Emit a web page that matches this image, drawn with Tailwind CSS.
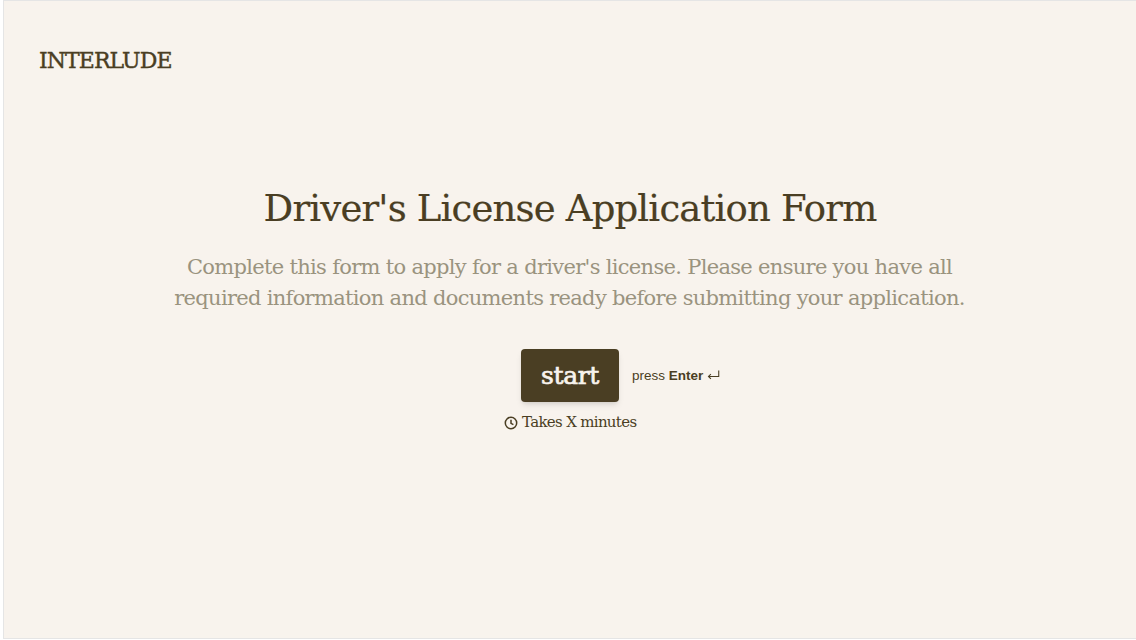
<!DOCTYPE html>
<html lang="en">
<head>
    <meta charset="UTF-8">
    <title>Interlude</title>
    <script src="https://cdn.jsdelivr.net/npm/@tailwindcss/browser@4"></script>
</head>
<body class="bg-white">
    <div class="ml-[3px] mb-[1px] w-[1133px] h-[639px] bg-[#f8f3ed] border-l border-t border-b border-[#e5e5e5] font-['DejaVu_Serif',serif] text-[#4a3e23] overflow-hidden">
        <!-- Logo -->
        <div class="pl-[35px] pt-[47px] h-[186px]">
            <div class="text-[22px] leading-[26px] font-normal tracking-[-0.93px] [-webkit-text-stroke:0.4px_#4a3e23]">INTERLUDE</div>
        </div>

        <!-- Intro -->
        <div class="flex flex-col items-center">
            <h1 class="text-[37px] leading-[44px] font-normal tracking-[-0.82px] [-webkit-text-stroke:0.2px_#4a3e23]">Driver's License Application Form</h1>
            <p class="mt-[21px] mr-[1px] text-[21px] leading-[31px] text-center text-[#9a937f] tracking-[-0.69px]">
                Complete this form to apply for a driver's license. Please ensure you have all<br>
                required information and documents ready before submitting your application.
            </p>

            <div class="mt-[35px] flex items-center pl-[101px]">
                <button class="w-[98px] h-[53px] rounded-[4px] bg-[#4a3e23] text-[#f8f3ed] text-[25px] font-normal tracking-[-0.4px] [-webkit-text-stroke:0.7px_#f8f3ed] shadow-md">start</button>
                <div class="ml-[13px] w-[88px] flex items-center whitespace-nowrap font-['Liberation_Sans',sans-serif] text-[13.5px]">
                    <span class="mt-[1px]">press <b>Enter</b></span>
                    <svg class="ml-[4px] -mt-[1px]" width="13" height="12" viewBox="0 0 13 12" fill="none" stroke="currentColor" stroke-width="1.1">
                        <path d="M12 1.5V7.5H1.5M4 5L1.5 7.5L4 10"/>
                    </svg>
                </div>
            </div>

            <div class="mt-[10px] w-[133px] mr-[-1px] flex items-center whitespace-nowrap text-[15px] leading-[20px] tracking-[-0.68px]">
                <svg class="mr-[4px] mt-[1px] shrink-0" width="14" height="14" viewBox="0 0 14 14" fill="none" stroke="currentColor" stroke-width="1.5">
                    <circle cx="7" cy="7" r="5.7"/>
                    <path d="M7 3.8V7.3L9.4 8.6"/>
                </svg>
                <span>Takes X minutes</span>
            </div>
        </div>
    </div>
</body>
</html>
